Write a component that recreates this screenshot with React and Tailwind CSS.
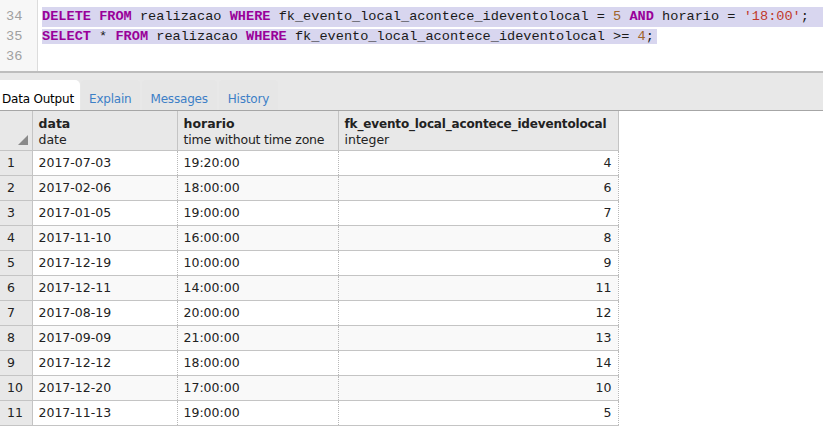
import React from "react";

const rows = [
  ["2017-07-03", "19:20:00", 4],
  ["2017-02-06", "18:00:00", 6],
  ["2017-01-05", "19:00:00", 7],
  ["2017-11-10", "16:00:00", 8],
  ["2017-12-19", "10:00:00", 9],
  ["2017-12-11", "14:00:00", 11],
  ["2017-08-19", "20:00:00", 12],
  ["2017-09-09", "21:00:00", 13],
  ["2017-12-12", "18:00:00", 14],
  ["2017-12-20", "17:00:00", 10],
  ["2017-11-13", "19:00:00", 5],
];

const K = ({ children }) => <span className="font-bold text-[#990099]">{children}</span>;
const N = ({ children }) => <span className="text-[#a0652a]">{children}</span>;
const S = ({ children }) => <span className="text-[#c0392b]">{children}</span>;

export default function App() {
  const ui = { fontFamily: '"DejaVu Sans", Verdana, sans-serif' };
  const mono = { fontFamily: '"Liberation Mono", "Courier New", monospace' };
  return (
    <div className="w-[823px] h-[445px] bg-white overflow-hidden text-[#222]" style={ui}>
      {/* Editor */}
      <div className="h-[71px] flex overflow-hidden">
        <div className="w-[38px] shrink-0 bg-[#f7f7f7] border-r border-[#dcdcdc] text-[#a0a0a0] text-[13.6px] leading-[20px] -mt-[13px] pl-[6px]" style={mono}>
          <div>33</div>
          <div>34</div>
          <div>35</div>
          <div>36</div>
        </div>
        <div className="flex-1 pl-[4px] -mt-[13px] text-[13.6px] leading-[20px] whitespace-pre text-[#1a1a1a]" style={mono}>
          <div>&nbsp;</div>
          <div className="bg-[#d8d6ef]">
            <K>DELETE</K> <K>FROM</K> realizacao <K>WHERE</K> fk_evento_local_acontece_ideventolocal = <N>5</N> <K>AND</K> horario = <S>'18:00'</S>;
          </div>
          <div>
            <span className="bg-[#d8d6ef] pr-[3px]">
              <K>SELECT</K> * <K>FROM</K> realizacao <K>WHERE</K> fk_evento_local_acontece_ideventolocal &gt;= <N>4</N>;
            </span>
          </div>
          <div>&nbsp;</div>
        </div>
      </div>
      {/* separator */}
      <div className="h-[2px] bg-[#bdbdbd]" />
      {/* Tab bar */}
      <div className="h-[38px] bg-[#e8e8e8] border-b border-[#a6a6a6] flex items-end text-[12px] tracking-[-0.2px]">
        <div className="h-[30px] w-[80px] bg-white rounded-tr-[5px] pl-[2px] pt-[11px] leading-[16px] text-black">Data Output</div>
        <div className="h-[30px] ml-[1px] px-[8px] pt-[11px] leading-[16px] text-[#3d7fc6] bg-[#e6e6e6] rounded-t-[4px]">Explain</div>
        <div className="h-[30px] ml-[2px] px-[9px] pt-[11px] leading-[16px] text-[#3d7fc6] bg-[#e6e6e6] rounded-t-[4px]">Messages</div>
        <div className="h-[30px] ml-[2px] px-[9px] pt-[11px] leading-[16px] text-[#3d7fc6] bg-[#e6e6e6] rounded-t-[4px]">History</div>
      </div>
      {/* Table */}
      <table className="border-collapse text-[12.5px] leading-[16px]" style={{ tableLayout: "fixed", width: 618 }}>
        <colgroup>
          <col style={{ width: 32 }} />
          <col style={{ width: 145 }} />
          <col style={{ width: 161 }} />
          <col style={{ width: 280 }} />
        </colgroup>
        <thead>
          <tr className="h-[39px] bg-[#e8e8e8]">
            <th className="relative border-r border-b border-[#c4c4c4] p-0">
              <svg className="absolute right-[4px] bottom-[5px]" width="10" height="10" viewBox="0 0 10 10">
                <polygon points="10,0 10,10 0,10" fill="#8a8a8a" />
              </svg>
            </th>
            <th className="border-r border-b border-[#c4c4c4] text-left font-normal px-[6px] pt-[4px] align-middle">
              <div className="font-bold text-[12.5px]">data</div>
              <div>date</div>
            </th>
            <th className="border-r border-b border-[#c4c4c4] text-left font-normal px-[6px] pt-[4px] align-middle">
              <div className="font-bold text-[12.5px]">horario</div>
              <div className="tracking-[-0.2px]">time without time zone</div>
            </th>
            <th className="border-r border-b border-[#c4c4c4] text-left font-normal px-[6px] pt-[4px] align-middle whitespace-nowrap overflow-hidden">
              <div className="font-bold text-[12px] tracking-[-0.15px]">fk_evento_local_acontece_ideventolocal</div>
              <div>integer</div>
            </th>
          </tr>
        </thead>
        <tbody>
          {rows.map((r, i) => (
            <tr key={i} className={"h-[25px] " + (i % 2 === 1 ? "bg-[#f9f9f9]" : "bg-white")}>
              <td className="bg-[#e8e8e8] border-b border-r border-[#c4c4c4] px-[7px]">{i + 1}</td>
              <td className="border-b border-b-[#c4c4c4] border-r border-r-[#b8b8b8] border-dotted px-[6px]" style={{ borderBottomStyle: "solid" }}>{r[0]}</td>
              <td className="border-b border-b-[#c4c4c4] border-r border-r-[#b8b8b8] border-dotted px-[6px]" style={{ borderBottomStyle: "solid" }}>{r[1]}</td>
              <td className="border-b border-b-[#c4c4c4] border-r border-r-[#b8b8b8] border-dotted px-[6px] text-right" style={{ borderBottomStyle: "solid" }}>{r[2]}</td>
            </tr>
          ))}
        </tbody>
      </table>
    </div>
  );
}
